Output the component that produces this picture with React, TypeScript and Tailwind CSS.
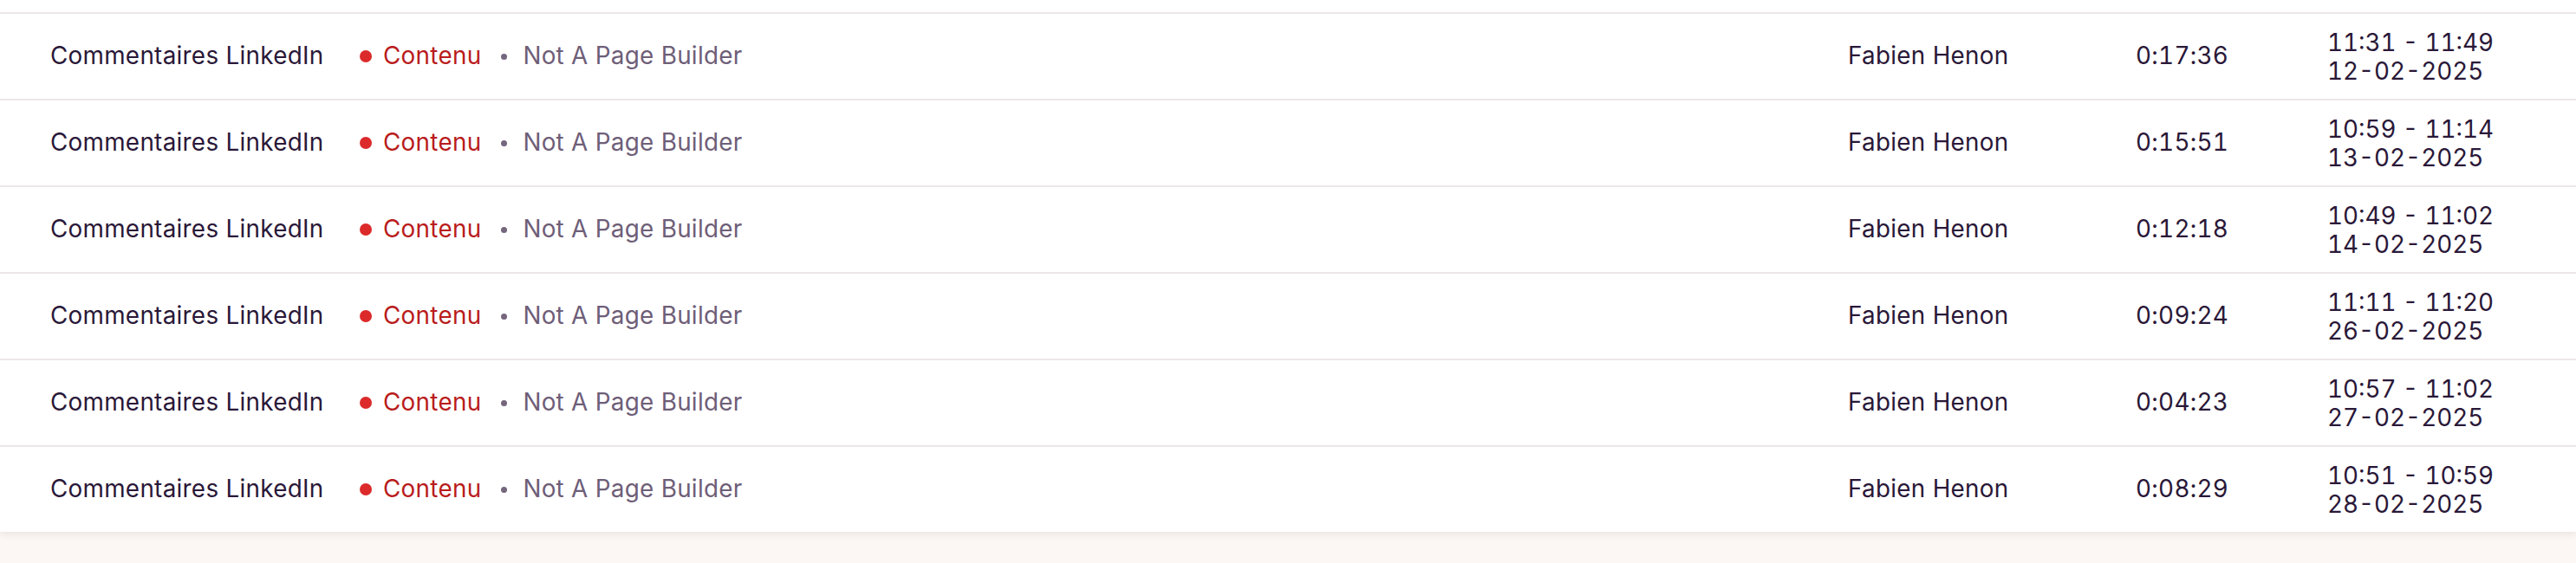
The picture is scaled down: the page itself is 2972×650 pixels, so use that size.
const rows = [
  { duration: "0:17:36", range: "11:31 - 11:49", date: "12-02-2025" },
  { duration: "0:15:51", range: "10:59 - 11:14", date: "13-02-2025" },
  { duration: "0:12:18", range: "10:49 - 11:02", date: "14-02-2025" },
  { duration: "0:09:24", range: "11:11 - 11:20", date: "26-02-2025" },
  { duration: "0:04:23", range: "10:57 - 11:02", date: "27-02-2025" },
  { duration: "0:08:29", range: "10:51 - 10:59", date: "28-02-2025" },
];

export default function App() {
  return (
    <div className="min-h-[650px] bg-[#fcf7f4] font-['Inter',sans-serif] text-[27.8px] tracking-[0.3px] text-[#2a1838]">
      <div className="bg-white shadow-[0_3px_8px_rgba(70,40,50,0.09)]">
        <div className="h-[16px] border-b-2 border-[#ece7e9]" />
        {rows.map((row, i) => (
          <div
            key={row.date}
            className={`grid grid-cols-[357px_1717px_332px_221px_1fr] items-center pl-[58px] ${
              i < rows.length - 1 ? "h-[100px] border-b-2 border-[#ece7e9]" : "h-[98px]"
            }`}
          >
            <span>Commentaires LinkedIn</span>
            <span className="flex items-center">
              <span className="h-[14px] w-[14px] rounded-full bg-[#dc2a2a]" />
              <span className="ml-[13px] text-[#b91c1c]">Contenu</span>
              <span className="ml-[23px] h-[7px] w-[7px] rounded-full bg-[#75667e]" />
              <span className="ml-[18px] text-[#6e5e78]">Not A Page Builder</span>
            </span>
            <span>Fabien Henon</span>
            <span className="tabular-nums">{row.duration}</span>
            <span className="flex flex-col pt-[2px] leading-[33px] tracking-normal tabular-nums">
              <span>{row.range}</span>
              <span>{row.date}</span>
            </span>
          </div>
        ))}
      </div>
    </div>
  );
}
